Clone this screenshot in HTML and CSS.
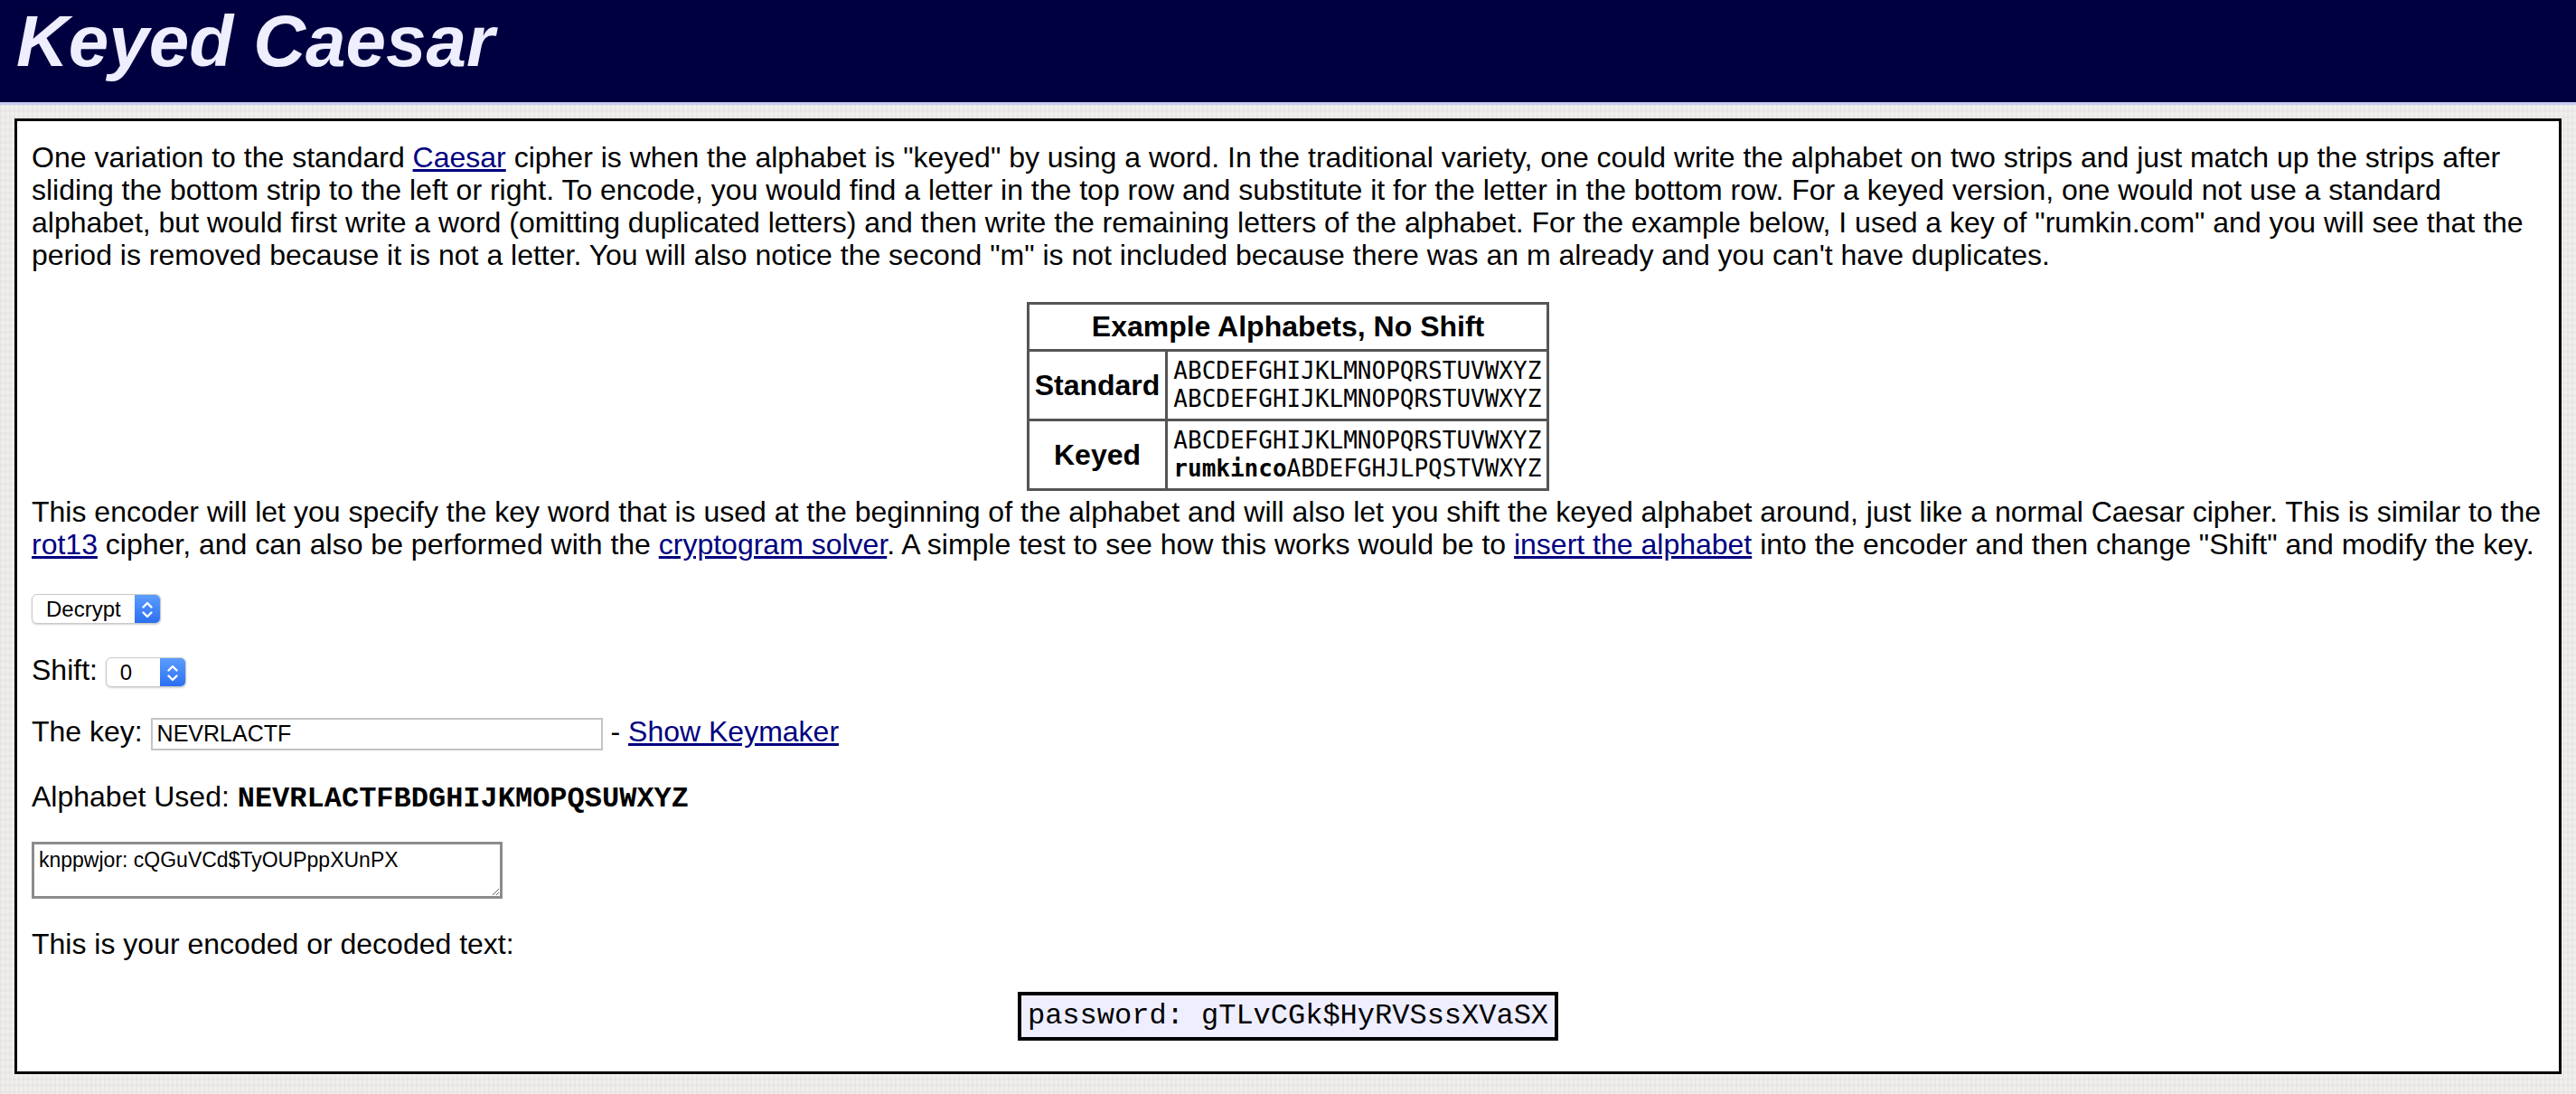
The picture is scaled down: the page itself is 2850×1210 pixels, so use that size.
FILE: index.html
```html
<!DOCTYPE html>
<html lang="en">
<head>
<meta charset="utf-8">
<title>Keyed Caesar</title>
<link rel="stylesheet" href="styles.css">
</head>
<body>
<header class="site-header">
  <h1 class="title">Keyed Caesar</h1>
</header>
<main class="panel">
  <p class="intro">One variation to the standard <a href="#">Caesar</a> cipher is when the alphabet is "keyed" by using a word. In the traditional variety, one could write the alphabet on two strips and just match up the strips after sliding the bottom strip to the left or right. To encode, you would find a letter in the top row and substitute it for the letter in the bottom row. For a keyed version, one would not use a standard alphabet, but would first write a word (omitting duplicated letters) and then write the remaining letters of the alphabet. For the example below, I used a key of "rumkin.com" and you will see that the period is removed because it is not a letter. You will also notice the second "m" is not included because there was an m already and you can't have duplicates.</p>
  <table class="example">
    <tr><th colspan="2" class="example-head">Example Alphabets, No Shift</th></tr>
    <tr><th class="label">Standard</th><td class="mono">ABCDEFGHIJKLMNOPQRSTUVWXYZ<br>ABCDEFGHIJKLMNOPQRSTUVWXYZ</td></tr>
    <tr><th class="label">Keyed</th><td class="mono">ABCDEFGHIJKLMNOPQRSTUVWXYZ<br><b>rumkinco</b>ABDEFGHJLPQSTVWXYZ</td></tr>
  </table>
  <p class="after-table">This encoder will let you specify the key word that is used at the beginning of the alphabet and will also let you shift the keyed alphabet around, just like a normal Caesar cipher. This is similar to the <a href="#">rot13</a> cipher, and can also be performed with the <a href="#">cryptogram solver</a>. A simple test to see how this works would be to <a href="#">insert the alphabet</a> into the encoder and then change "Shift" and modify the key.</p>
  <div class="row row-mode">
    <span class="select"><select class="select-box select-wide"><option>Decrypt</option><option>Encrypt</option></select><span class="stepper"><svg width="28" height="33" viewBox="0 0 28 33"><path d="M9.5 13.5 L14 9 L18.5 13.5" fill="none" stroke="#fff" stroke-width="2.4" stroke-linecap="round" stroke-linejoin="round"/><path d="M9.5 19.5 L14 24 L18.5 19.5" fill="none" stroke="#fff" stroke-width="2.4" stroke-linecap="round" stroke-linejoin="round"/></svg></span></span>
  </div>
  <div class="row row-shift">Shift: <span class="select"><select class="select-box select-narrow"><option>0</option></select><span class="stepper"><svg width="28" height="33" viewBox="0 0 28 33"><path d="M9.5 13.5 L14 9 L18.5 13.5" fill="none" stroke="#fff" stroke-width="2.4" stroke-linecap="round" stroke-linejoin="round"/><path d="M9.5 19.5 L14 24 L18.5 19.5" fill="none" stroke="#fff" stroke-width="2.4" stroke-linecap="round" stroke-linejoin="round"/></svg></span></span></div>
  <div class="row row-key">The key: <input class="key-input" type="text" value="NEVRLACTF"> - <a href="#">Show Keymaker</a></div>
  <div class="row row-alpha">Alphabet Used: <b class="alpha">NEVRLACTFBDGHIJKMOPQSUWXYZ</b></div>
  <textarea class="cipher-text">knppwjor: cQGuVCd$TyOUPppXUnPX</textarea>
  <div class="row row-result">This is your encoded or decoded text:</div>
  <div class="output-row"><span class="output">password: gTLvCGk$HyRVSssXVaSX</span></div>
</main>
</body>
</html>
```
FILE: styles.css
```css
html, body {
  margin: 0;
  padding: 0;
}
body {
  background-color: #eeedeb;
  background-image:
    repeating-linear-gradient(90deg, rgba(0,0,0,0.018) 0 2px, rgba(255,255,255,0.03) 2px 5px),
    repeating-linear-gradient(0deg, rgba(0,0,0,0.015) 0 3px, rgba(255,255,255,0.03) 3px 7px);
  font-family: "Liberation Sans", Arial, Helvetica, sans-serif;
  font-size: 32px;
  line-height: 36px;
  color: #000;
  padding-bottom: 21px;
}
a {
  color: #000080;
  text-decoration: underline;
}
.site-header {
  background: #000040;
  border-bottom: 3px solid #c9c9f2;
}
.title {
  margin: 0;
  padding: 0 0 21px 18px;
  font-family: "Liberation Sans", Arial, sans-serif;
  font-size: 80px;
  font-weight: bold;
  font-style: italic;
  line-height: 92px;
  color: #eeeeff;
}
.panel {
  display: block;
  margin: 15px 16px 0 16px;
  border: 3px solid #000;
  background: #fff;
  padding: 22px 16px 34px 16px;
}
.intro {
  margin: 0;
}
.example {
  margin: 34px auto 0 auto;
  border-collapse: collapse;
  border: 3px solid #555;
}
.example th, .example td {
  border: 3px solid #555;
  padding: 6px 6px;
}
.example-head {
  font-weight: bold;
  text-align: center;
  line-height: 37px;
}
.label {
  font-weight: bold;
  text-align: center;
}
.mono {
  font-family: "DejaVu Sans Mono", Menlo, monospace;
  font-size: 26px;
  line-height: 31px;
  text-align: left;
  padding: 6px 7px 6px 5px;
}
.after-table {
  margin: 5px 0 0 0;
}
.row {
  margin: 0;
}
.row-mode {
  margin-top: 35px;
  height: 33px;
  line-height: 33px;
}
.row-shift {
  margin-top: 35px;
}
.row-key {
  margin-top: 31px;
}
.row-alpha {
  margin-top: 33px;
}
.row-result {
  margin-top: 32px;
}
.select {
  display: inline-flex;
  vertical-align: middle;
  height: 33px;
  box-sizing: border-box;
  border: 1px solid #c9c9c9;
  border-radius: 6px;
  background: #fff;
  box-shadow: 0 1px 2px rgba(0,0,0,0.18);
  overflow: hidden;
}
.select-box {
  appearance: none;
  -webkit-appearance: none;
  border: none;
  outline: none;
  background: transparent;
  font-family: "Liberation Sans", Arial, sans-serif;
  font-size: 24px;
  color: #000;
  padding: 0 0 0 15px;
  margin: 0;
  height: 31px;
  line-height: 31px;
}
.select-wide {
  width: 113px;
}
.select-narrow {
  width: 59px;
}
.stepper {
  display: flex;
  width: 28px;
  height: 31px;
  background: linear-gradient(#5b9dff, #2c6ff0);
}
.stepper svg {
  display: block;
}
.key-input {
  box-sizing: border-box;
  width: 500px;
  height: 36px;
  border: 2px solid #c4c4c4;
  padding: 0 5px;
  margin: 0;
  font-family: "Liberation Sans", Arial, sans-serif;
  font-size: 25px;
  vertical-align: middle;
  color: #000;
  background: #fff;
}
.alpha {
  font-family: "Liberation Mono", "Courier New", monospace;
  font-weight: bold;
  font-size: 32px;
}
.cipher-text {
  display: block;
  box-sizing: border-box;
  width: 521px;
  height: 63px;
  margin: 29px 0 0 0;
  border: 3px solid #8c8c8c;
  padding: 4px 5px;
  font-family: "Liberation Sans", Arial, sans-serif;
  font-size: 23px;
  line-height: 27px;
  color: #000;
  background: #fff;
}
.output-row {
  margin-top: 35px;
  text-align: center;
  line-height: 0;
}
.output {
  display: inline-block;
  border: 4px solid #000;
  background: #eeeeff;
  padding: 3px 7px;
  font-family: "Liberation Mono", "Courier New", monospace;
  font-size: 32px;
  line-height: 40px;
}
```
